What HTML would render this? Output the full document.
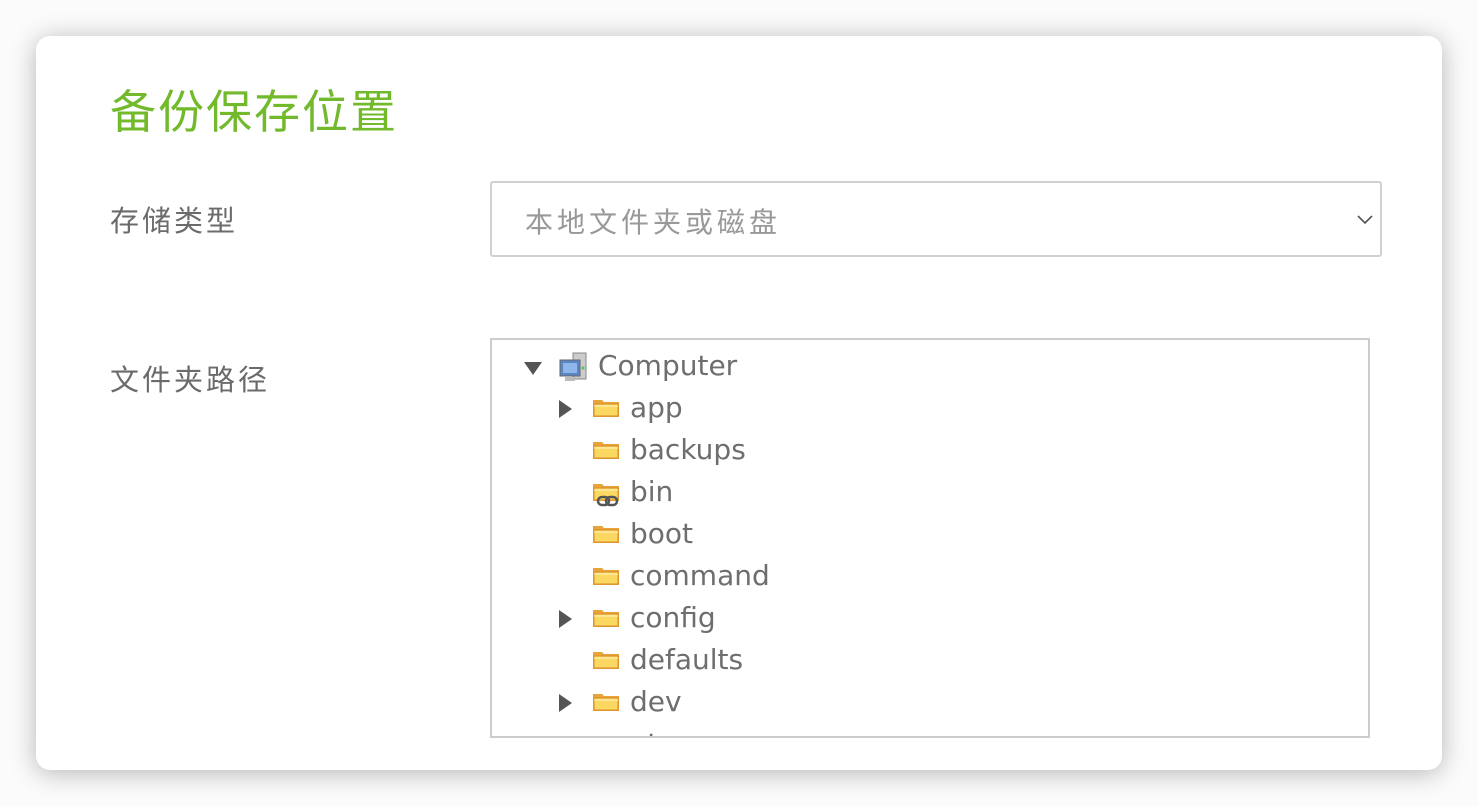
<!DOCTYPE html>
<html><head><meta charset="utf-8"><style>
body{margin:0;width:1478px;height:806px;background:#fbfbfb;font-family:"Liberation Sans","Noto Sans CJK SC",sans-serif;overflow:hidden;position:relative}
.card{position:absolute;left:36px;top:36px;width:1406px;height:734px;background:#fff;border-radius:14px;box-shadow:0 3px 26px rgba(0,0,0,.28)}
.t{position:absolute;left:110px;top:76px;font-size:46px;color:#72b92c;letter-spacing:2px}
.l{position:absolute;left:110px;font-size:29px;color:#6b6b6b;letter-spacing:3px}
.sel{position:absolute;left:490px;top:181px;width:892px;height:76px;border:2px solid #d0d0d0;border-radius:3px;box-sizing:border-box}
.sel span{position:absolute;left:33px;top:18px;font-size:28px;color:#999;letter-spacing:4px}
.tree{position:absolute;left:490px;top:338px;width:880px;height:400px;border:2px solid #ccc;box-sizing:border-box;overflow:hidden}
.r{position:absolute;font-family:"DejaVu Sans",sans-serif;font-size:28px;color:#6e6e6e;height:42px;line-height:42px}
.fo{position:absolute;width:28px;height:20px}
.ar{position:absolute;width:0;height:0;border-top:9px solid transparent;border-bottom:9px solid transparent;border-left:13px solid #555}
</style></head><body>
<div class="card"></div>
<div class="t">备份保存位置</div>
<div class="l" style="top:198px">存储类型</div>
<div class="l" style="top:357px">文件夹路径</div>
<div class="sel"><span>本地文件夹或磁盘</span>
<svg style="position:absolute;right:6px;top:30px" width="18" height="12"><path d="M2 3l7 7 7-7" fill="none" stroke="#555" stroke-width="1.6"/></svg></div>
<div class="tree">
<div style="position:absolute;left:32px;top:22px;width:0;height:0;border-left:9px solid transparent;border-right:9px solid transparent;border-top:13px solid #555"></div>
<svg style="position:absolute;left:66px;top:12px" width="32" height="32"><rect x="15" y="1" width="13" height="26" fill="#ccc" stroke="#888"/><rect x="2" y="8" width="20" height="16" fill="#5b86c6" stroke="#666"/><rect x="5" y="11" width="14" height="10" fill="#8fb5ea"/><rect x="7" y="25" width="10" height="4" fill="#bbb"/><circle cx="25" cy="16" r="1.5" fill="#4c4"/></svg>
<div class="r" style="left:106px;top:5px">Computer</div>
<div id="rows"></div>
</div>
<script>
var items=[["app",1],["backups",0],["bin",2],["boot",0],["command",0],["config",1],["defaults",0],["dev",1],["etc",0]];
var h="";
items.forEach(function(it,i){var y=48+i*42;
if(it[1]==1)h+='<div class="ar" style="left:67px;top:'+(y+12)+'px"></div>';
h+='<svg class="fo" style="left:100px;top:'+(y+10)+'px" viewBox="0 0 28 20"><path d="M1 2h9l2 2h15v15H1z" fill="#e7a43a"/><path d="M2 6h24v12H2z" fill="#fbd862" stroke="#d98a24"/><path d="M2 8h24" stroke="#fff6c8"/></svg>';
if(it[1]==2)h+='<svg style="position:absolute;left:104px;top:'+(y+22)+'px" width="24" height="14"><rect x="2" y="3" width="11" height="8" rx="4" fill="none" stroke="#555" stroke-width="2.5"/><rect x="10" y="3" width="11" height="8" rx="4" fill="none" stroke="#555" stroke-width="2.5"/></svg>';
h+='<div class="r" style="left:138px;top:'+(y-1)+'px">'+it[0]+'</div>';});
document.getElementById("rows").innerHTML=h;
</script>
</body></html>
